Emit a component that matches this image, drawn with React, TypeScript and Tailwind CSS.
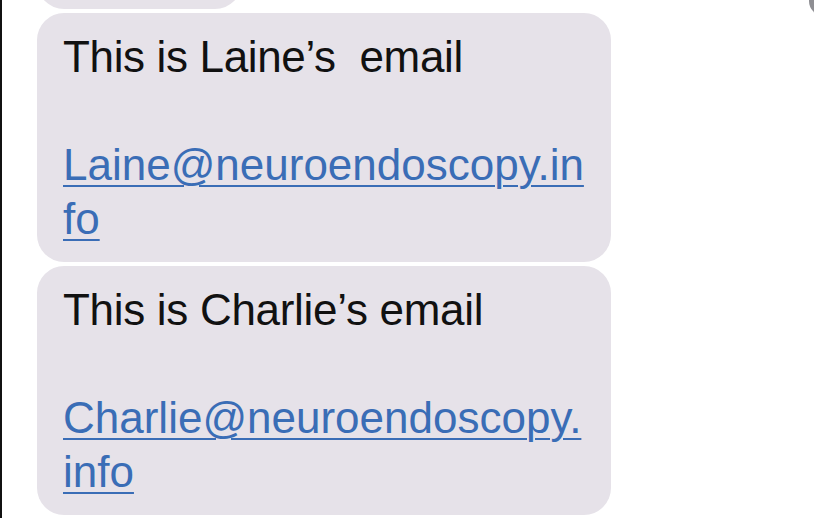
export default function App() {
  const bubble =
    'w-[574px] rounded-[27px] bg-[#e6e2e9] pt-[17px] pb-[16px] pl-[26px] text-[44px] leading-[54px] text-[#111111] whitespace-pre-wrap';
  const link = 'text-[#3a6db6] underline decoration-2 underline-offset-[5px]';

  return (
    <div
      className="relative flex w-[814px] h-[518px] overflow-hidden bg-white"
      style={{ fontFamily: '"Liberation Sans", Arial, sans-serif' }}
    >
      {/* left edge strip */}
      <div className="w-[2px] shrink-0 bg-[#111111]" />

      <div className="flex flex-col gap-[4px] pl-[35px]">
        {/* tail of previous message */}
        <div className="-mt-[51px] h-[60px] w-[205px] rounded-[27px] bg-[#e6e2e9]" />

        <div className={bubble}>
          <div className="tracking-[-0.35px]">This is Laine’s  email</div>
          <div>&nbsp;</div>
          <div>
            <span className={link}>Laine@neuroendoscopy.in</span>
          </div>
          <div>
            <span className={link}>fo</span>
          </div>
        </div>

        <div className={bubble}>
          <div className="tracking-[-0.3px]">This is Charlie’s email</div>
          <div>&nbsp;</div>
          <div>
            <span className={link}>Charlie@neuroendoscopy.</span>
          </div>
          <div>
            <span className={link}>info</span>
          </div>
        </div>
      </div>

      {/* cropped avatar in the corner */}
      <div className="absolute left-[809px] -top-[20px] w-[30px] h-[36px] rounded-full bg-[#8e8e93]" />
    </div>
  );
}
